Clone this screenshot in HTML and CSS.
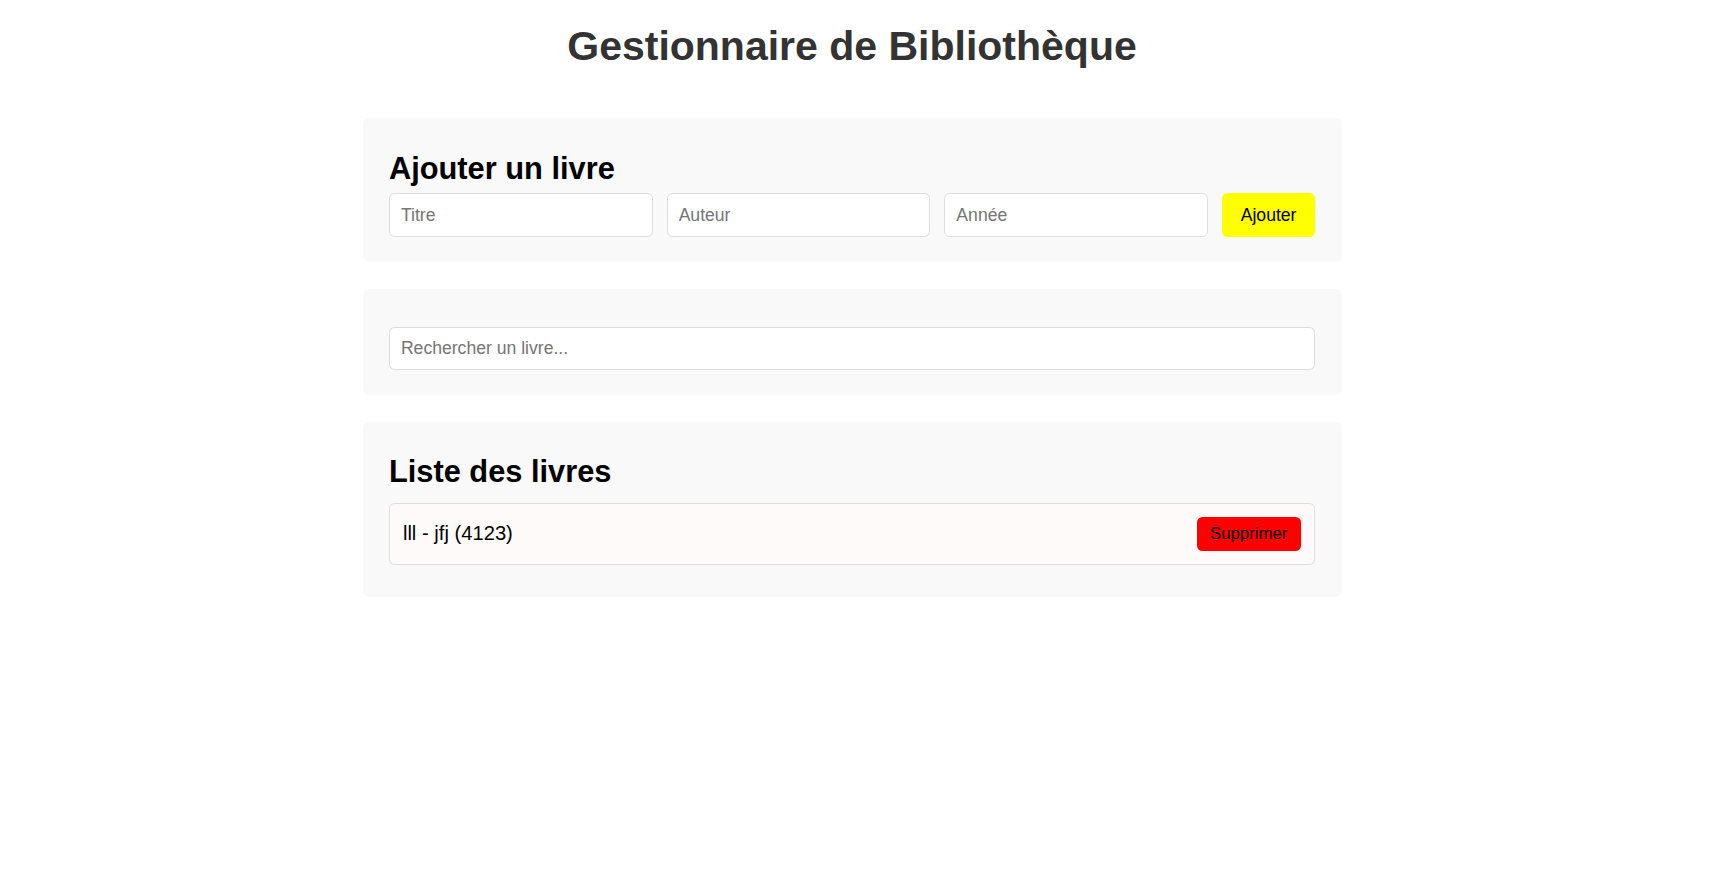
FILE: index.html
```html
<!DOCTYPE html>
<html lang="fr">
<head>
<meta charset="utf-8">
<title>Gestionnaire de Bibliothèque</title>
<link rel="stylesheet" href="styles.css">
</head>
<body>
  <h1 class="page-title">Gestionnaire de Bibliothèque</h1>
  <main class="container">
    <section class="card card-add">
      <h2 class="card-title">Ajouter un livre</h2>
      <form class="add-form">
        <input class="field" type="text" placeholder="Titre">
        <input class="field" type="text" placeholder="Auteur">
        <input class="field" type="text" placeholder="Année">
        <button class="btn-add" type="button">Ajouter</button>
      </form>
    </section>
    <section class="card card-search">
      <input class="field search-field" type="text" placeholder="Rechercher un livre...">
    </section>
    <section class="card card-list">
      <h2 class="card-title list-title">Liste des livres</h2>
      <ul class="book-list">
        <li class="book-item">
          <span class="book-text">lll - jfj (4123)</span>
          <button class="btn-delete" type="button">Supprimer</button>
        </li>
      </ul>
    </section>
  </main>
</body>
</html>
```

FILE: styles.css
```css
* {
  box-sizing: border-box;
}

html, body {
  background: #ffffff;
}

body {
  margin: 0;
  padding: 0 6px 0 0;
  font-family: "Liberation Sans", Arial, Helvetica, sans-serif;
  color: #000;
}

.page-title {
  margin: 23px 0 48px;
  font-size: 41px;
  font-weight: bold;
  line-height: 47px;
  color: #333333;
  text-align: center;
}

.container {
  width: 979px;
  margin: 0 auto;
  display: flex;
  flex-direction: column;
}

.card {
  background: #f9f9f9;
  border-radius: 6px;
  padding: 22px 26.4px;
}

.card-add {
  padding-bottom: 25px;
}

.card-search {
  margin-top: 27px;
  padding-top: 38.3px;
  padding-bottom: 24.7px;
}

.card-list {
  margin-top: 26.6px;
  padding-bottom: 32.5px;
}

.card-title {
  margin: 10.6px 0 7px;
  font-size: 30.8px;
  line-height: 35.4px;
  font-weight: bold;
  color: #000;
}

.list-title {
  margin-bottom: 13.6px;
}

.add-form {
  display: flex;
  gap: 14px;
  margin: 0;
}

.field {
  flex: 1 1 0;
  min-width: 0;
  height: 44px;
  padding: 0 11px;
  border: 1px solid #dcdcdc;
  border-radius: 5.5px;
  background: #ffffff;
  font-family: "Liberation Sans", Arial, Helvetica, sans-serif;
  font-size: 17.6px;
  color: #000;
  outline: none;
}

.field::placeholder {
  color: #757575;
}

.search-field {
  display: block;
  width: 100%;
  height: 43px;
}

.btn-add {
  flex: 0 0 93px;
  height: 44px;
  padding: 0;
  border: none;
  border-radius: 5.5px;
  background: #ffff00;
  color: #000;
  font-family: "Liberation Sans", Arial, Helvetica, sans-serif;
  font-size: 17.6px;
}

.book-list {
  list-style: none;
  margin: 0;
  padding: 0;
}

.book-item {
  display: flex;
  align-items: center;
  justify-content: space-between;
  height: 61.5px;
  padding: 0 13.2px 0 13px;
  border: 1px solid #dddddd;
  border-radius: 5.5px;
  background: #fffafa;
}

.book-text {
  font-size: 20.2px;
  color: #000;
}

.btn-delete {
  width: 104.4px;
  height: 33.5px;
  padding: 0;
  border: none;
  border-radius: 5.5px;
  background: #ff0000;
  color: #000;
  font-family: "Liberation Sans", Arial, Helvetica, sans-serif;
  font-size: 16.8px;
}
```
